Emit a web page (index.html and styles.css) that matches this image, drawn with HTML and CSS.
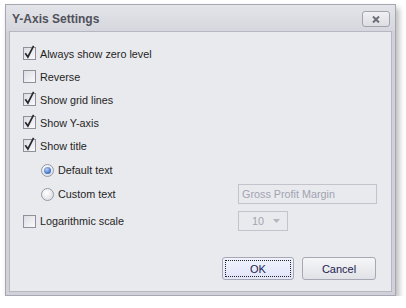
FILE: index.html
```html
<!DOCTYPE html>
<html lang="en">
<head>
    <meta charset="UTF-8">
    <meta name="viewport" content="width=device-width, initial-scale=1.0">
    <title>Y-Axis Settings</title>
    <link rel="stylesheet" href="styles.css">
</head>
<body>
    <div class="window">
      <div class="titlebar">
        <span class="title">Y-Axis Settings</span>
        <span class="close-btn">
          <svg width="8" height="7" viewBox="0 0 8 7"><path d="M1 0.5 L7 6.5 M7 0.5 L1 6.5" stroke="#6d6e76" stroke-width="2" fill="none"/></svg>
        </span>
      </div>

      <div class="panel">
        <div class="row">
          <span class="check"><svg class="tick" width="13" height="13" viewBox="0 0 13 13"><path d="M2.3 6.2 L4.9 10 L10.6 -1.2"/></svg></span><span class="label">Always show zero level</span>
        </div>
        <div class="row">
          <span class="check"></span><span class="label">Reverse</span>
        </div>
        <div class="row">
          <span class="check"><svg class="tick" width="13" height="13" viewBox="0 0 13 13"><path d="M2.3 6.2 L4.9 10 L10.6 -1.2"/></svg></span><span class="label">Show grid lines</span>
        </div>
        <div class="row">
          <span class="check"><svg class="tick" width="13" height="13" viewBox="0 0 13 13"><path d="M2.3 6.2 L4.9 10 L10.6 -1.2"/></svg></span><span class="label">Show Y-axis</span>
        </div>
        <div class="row">
          <span class="check"><svg class="tick" width="13" height="13" viewBox="0 0 13 13"><path d="M2.3 6.2 L4.9 10 L10.6 -1.2"/></svg></span><span class="label">Show title</span>
        </div>

        <div class="row radio-row tall">
          <span class="radio on"></span><span class="label">Default text</span>
        </div>
        <div class="row grid-row short">
          <div class="radio-row">
            <span class="radio"></span><span class="label">Custom text</span>
          </div>
          <div class="textbox">Gross Profit Margin</div>
        </div>
        <div class="row grid-row log-row">
          <div class="inline">
            <span class="check"></span><span class="label">Logarithmic scale</span>
          </div>
          <div class="combo">
            <span>10</span>
            <svg width="7" height="4" viewBox="0 0 7 4"><path d="M0 0 L7 0 L3.5 4 Z" fill="#b4b5bf"/></svg>
          </div>
        </div>

        <div class="buttons">
          <button class="btn ok"><span>OK</span></button>
          <button class="btn">Cancel</button>
        </div>
      </div>
    </div>
</body>
</html>
```

FILE: styles.css
```css
body {
  margin: 0;
  background: #fff;
  font-family: "Liberation Sans", Arial, sans-serif;
  font-size: 10.8px;
  color: #1f1f24;
}
.window {
  box-sizing: border-box;
  width: 391px;
  height: 292px;
  margin: 4px 0 0 5px;
  border: 1px solid #a6a7b2;
  background: #d0d1d9;
  padding: 0 3px 3px 3px;
  display: flex;
  flex-direction: column;
  box-shadow: 3px 4px 6px rgba(0, 0, 0, 0.28);
}
.titlebar {
  height: 26px;
  display: flex;
  align-items: center;
  justify-content: space-between;
  background: linear-gradient(#e3e4e9, #d6d7de);
  margin: 0 -3px;
  padding-left: 6px;
  padding-right: 5px;
}
.title {
  font-weight: bold;
  font-size: 12px;
  color: #50515a;
  margin-top: 1px;
}
.close-btn {
  box-sizing: border-box;
  width: 28px;
  height: 16px;
  border: 1px solid #a2a3ad;
  border-radius: 3px;
  background: linear-gradient(#f1f1f4, #dcdde3);
  display: flex;
  align-items: center;
  justify-content: center;
  margin-top: 2px;
}
.panel {
  flex: 1;
  background: #e9eaee;
  border: 1px solid #b6b7c1;
  padding: 10px 0 0 0;
  display: flex;
  flex-direction: column;
}
.row {
  height: 23px;
  display: flex;
  align-items: center;
  padding-left: 13px;
}
.tall {
  height: 26px;
}
.short {
  height: 22px;
}
.log-row {
  height: 32px;
}
.radio-row {
  display: flex;
  align-items: center;
}
.row.radio-row {
  padding-left: 31px;
}
.grid-row {
  display: grid;
  grid-template-columns: 215px 139px;
  align-items: center;
}
.grid-row .radio-row {
  padding-left: 18px;
}
.inline {
  display: flex;
  align-items: center;
}
.label {
  margin-left: 4px;
}
.check {
  position: relative;
  box-sizing: border-box;
  width: 13px;
  height: 13px;
  border: 1px solid #8f909c;
  background: linear-gradient(135deg, #dcdde3, #fafafc);
  flex: none;
}
.tick {
  position: absolute;
  left: -1px;
  top: -1px;
  overflow: visible;
}
.tick path {
  fill: none;
  stroke: #2a2a2e;
  stroke-width: 1.7;
  stroke-linejoin: miter;
}
.radio {
  position: relative;
  box-sizing: border-box;
  width: 13px;
  height: 13px;
  border-radius: 50%;
  border: 1px solid #979aa6;
  background: radial-gradient(circle at 40% 35%, #ffffff, #d6d7dd);
  flex: none;
}
.radio.on::after {
  content: "";
  position: absolute;
  left: 2px;
  top: 2px;
  width: 7px;
  height: 7px;
  border-radius: 50%;
  background: radial-gradient(circle at 40% 35%, #b8d0f4, #3c6cc6 70%);
}
.textbox {
  box-sizing: border-box;
  height: 20px;
  border: 1px solid #c2c3cb;
  color: #a2a3b0;
  padding: 0 3px;
  display: flex;
  align-items: center;
}
.combo {
  box-sizing: border-box;
  width: 50px;
  height: 20px;
  border: 1px solid #c2c3cb;
  color: #a2a3b0;
  display: flex;
  align-items: center;
  justify-content: flex-end;
  gap: 9px;
  padding-right: 7px;
}
.buttons {
  margin-top: auto;
  display: flex;
  justify-content: flex-end;
  gap: 8px;
  padding: 0 15px 11px 0;
}
.btn {
  box-sizing: border-box;
  width: 74px;
  height: 23px;
  border: 1px solid #a7a8b3;
  border-radius: 3px;
  background: linear-gradient(#f6f6f8, #e1e2e7);
  font-family: "Liberation Sans", Arial, sans-serif;
  font-size: 11px;
  color: #202350;
  padding: 0;
}
.btn.ok {
  width: 72px;
  background: linear-gradient(#f0f2fd, #e1e5f8);
  padding: 2px;
}
.btn.ok span {
  display: flex;
  align-items: center;
  justify-content: center;
  height: 100%;
  border: 1px dotted #222;
  box-sizing: border-box;
}
```
